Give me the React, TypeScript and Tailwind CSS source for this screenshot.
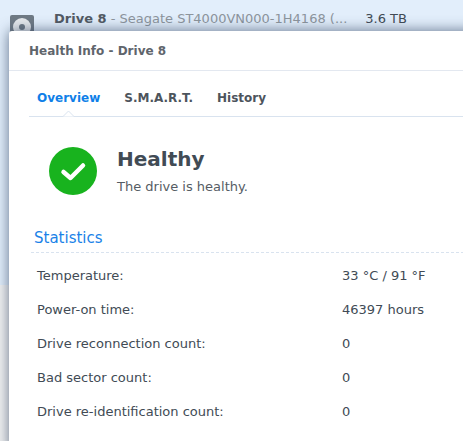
import React from "react";

const rows: [string, string][] = [
  ["Temperature:", "33 °C / 91 °F"],
  ["Power-on time:", "46397 hours"],
  ["Drive reconnection count:", "0"],
  ["Bad sector count:", "0"],
  ["Drive re-identification count:", "0"],
];

export default function App() {
  return (
    <div className="relative w-[463px] h-[441px] overflow-hidden bg-white font-['DejaVu_Sans','Liberation_Sans',sans-serif] text-[13px] text-[#414b55]">
      <div className="absolute left-0 right-0 top-0 h-[285px] bg-[#e2eefb]" />
      <div className="absolute left-0 top-[285px] bottom-0 right-0 bg-[#f2f2f2]" />
      <div className="relative h-[31px] flex">
        <svg className="absolute left-[10px] top-[15px]" width="24" height="24" viewBox="0 0 24 24">
          <rect width="24" height="24" rx="2" fill="#6f7a85" />
          <circle cx="12" cy="12" r="9" fill="#e6e9ec" />
          <circle cx="12" cy="12" r="3" fill="#6f7a85" />
        </svg>
        <div className="ml-[54px] mt-[10px] flex h-[18px] items-center whitespace-nowrap text-[13px]">
          <span className="font-bold text-[#525a64]">Drive 8</span>
          <span className="text-[#8d959d]">&nbsp;- Seagate ST4000VN000-1H4168 (...</span>
          <span className="ml-[18px] text-[#414b55]">3.6 TB</span>
        </div>
      </div>
      <div className="absolute left-[9px] top-[31px] w-[470px] h-[420px] rounded-tl-[3px] bg-white shadow-[0_0_14px_rgba(40,60,90,0.7)]">
        <div className="h-[40px] flex items-center border-b border-[#e3e8f0] pl-[20px] text-[12px] font-bold text-[#5f656c]">
          Health Info - Drive 8
        </div>
        <div className="relative ml-[20px] h-[46px] flex items-center gap-[24px] border-b border-[#d9e3ef] pl-[8px] pt-[8px] font-bold text-[12px] text-[#4d545c]">
          <span className="text-[#0f7fe8]">Overview</span>
          <span>S.M.A.R.T.</span>
          <span>History</span>
          <svg className="absolute left-[33px] bottom-[-1px]" width="13" height="7" viewBox="0 0 13 7">
            <path d="M0 6.5 H1 L6.5 1 L12 6.5 H13" fill="white" stroke="#d9e3ef" />
          </svg>
        </div>
        <div className="ml-[40px] mt-[30px] flex h-[48px] items-start gap-[20px]">
          <svg width="48" height="48" viewBox="0 0 48 48">
            <circle cx="24" cy="24" r="24" fill="#18b31e" />
            <path d="M14.5 25 L21.5 31 L34 18.5" fill="none" stroke="white" strokeWidth="4.5" strokeLinecap="round" strokeLinejoin="round" />
          </svg>
          <div>
            <div className="text-[20px] leading-[26px] font-bold text-[#414b55] -mt-[1px]">Healthy</div>
            <div className="mt-[7px] text-[13px] leading-[16px] text-[#555c64]">The drive is healthy.</div>
          </div>
        </div>
        <div className="ml-[22px] mt-[33px] h-[25px] border-b border-dashed border-[#d9e3ef] pl-[3px] text-[15px] leading-[20px] text-[#1a82e8]">
          Statistics
        </div>
        <div className="mt-[6px] pl-[28px]">
          {rows.map(([k, v]) => (
            <div key={k} className="flex h-[34px] items-center">
              <span className="w-[305px]">{k}</span>
              <span>{v}</span>
            </div>
          ))}
        </div>
      </div>
    </div>
  );
}
